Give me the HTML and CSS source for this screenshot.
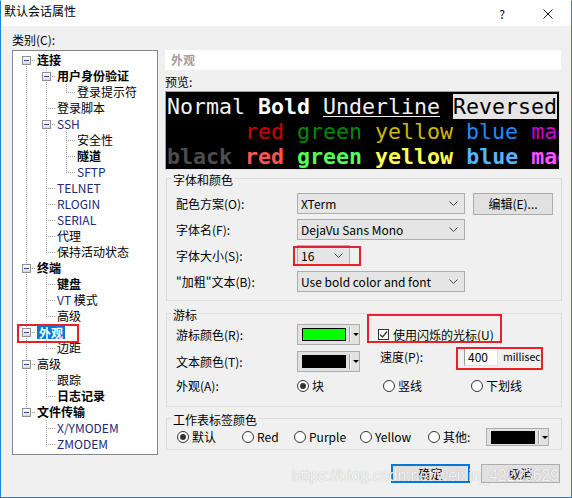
FILE: index.html
```
<!DOCTYPE html>
<html lang="zh-CN">
<head>
<meta charset="utf-8">
<title>默认会话属性</title>
<link rel="stylesheet" href="styles.css">
</head>
<body>
<div class="window">
  <div class="titlebar">
    <span class="title">默认会话属性</span>
    <span class="help">?</span>
    <svg class="close" width="10" height="10" viewBox="0 0 10 10"><path d="M0.5 0.5L9.5 9.5M9.5 0.5L0.5 9.5" stroke="#111" stroke-width="1" fill="none"/></svg>
  </div>
  <div class="main">
    <div class="leftcol">
      <div class="cat-label">类别(C):</div>
      <div class="tree">
        <div class="row"><span class="cell c-first"><span class="exp"></span></span><span class="txt b">连接</span></div>
        <div class="row"><span class="cell v"></span><span class="cell c-mid"><span class="exp"></span></span><span class="txt b">用户身份验证</span></div>
        <div class="row"><span class="cell v"></span><span class="cell v"></span><span class="cell c-last"></span><span class="txt">登录提示符</span></div>
        <div class="row"><span class="cell v"></span><span class="cell c-mid"></span><span class="txt">登录脚本</span></div>
        <div class="row"><span class="cell v"></span><span class="cell c-mid"><span class="exp"></span></span><span class="txt en">SSH</span></div>
        <div class="row"><span class="cell v"></span><span class="cell v"></span><span class="cell c-mid"></span><span class="txt">安全性</span></div>
        <div class="row"><span class="cell v"></span><span class="cell v"></span><span class="cell c-mid"></span><span class="txt b">隧道</span></div>
        <div class="row"><span class="cell v"></span><span class="cell v"></span><span class="cell c-last"></span><span class="txt en">SFTP</span></div>
        <div class="row"><span class="cell v"></span><span class="cell c-mid"></span><span class="txt en">TELNET</span></div>
        <div class="row"><span class="cell v"></span><span class="cell c-mid"></span><span class="txt en">RLOGIN</span></div>
        <div class="row"><span class="cell v"></span><span class="cell c-mid"></span><span class="txt en">SERIAL</span></div>
        <div class="row"><span class="cell v"></span><span class="cell c-mid"></span><span class="txt">代理</span></div>
        <div class="row"><span class="cell v"></span><span class="cell c-last"></span><span class="txt">保持活动状态</span></div>
        <div class="row"><span class="cell c-mid"><span class="exp"></span></span><span class="txt b">终端</span></div>
        <div class="row"><span class="cell v"></span><span class="cell c-mid"></span><span class="txt b">键盘</span></div>
        <div class="row"><span class="cell v"></span><span class="cell c-mid"></span><span class="txt"><span class="en">VT</span> 模式</span></div>
        <div class="row"><span class="cell v"></span><span class="cell c-last"></span><span class="txt">高级</span></div>
        <div class="row"><span class="cell c-mid"><span class="exp"></span></span><span class="txt b sel">外观</span></div>
        <div class="row"><span class="cell v"></span><span class="cell c-last"></span><span class="txt">边距</span></div>
        <div class="row"><span class="cell c-mid"><span class="exp"></span></span><span class="txt">高级</span></div>
        <div class="row"><span class="cell v"></span><span class="cell c-mid"></span><span class="txt">跟踪</span></div>
        <div class="row"><span class="cell v"></span><span class="cell c-last"></span><span class="txt b">日志记录</span></div>
        <div class="row"><span class="cell c-last"><span class="exp"></span></span><span class="txt b">文件传输</span></div>
        <div class="row"><span class="cell"></span><span class="cell c-mid"></span><span class="txt en">X/YMODEM</span></div>
        <div class="row"><span class="cell"></span><span class="cell c-last"></span><span class="txt en">ZMODEM</span></div>
      </div>
    </div>

    <div class="rightcol">
      <div class="page-head">外观</div>
      <div class="pv-label">预览:</div>
      <div class="preview">
<div class="pl"><span class="fg">Normal </span><span class="fgb">Bold</span><span class="fg"> </span><span class="fg ul">Underline</span><span class="fg"> </span><span class="rev">Reversed</span></div>
<div class="pl">      <span class="c-r">red</span> <span class="c-g">green</span> <span class="c-y">yellow</span> <span class="c-b">blue</span> <span class="c-m">magenta</span></div>
<div class="pl bold"><span class="c-k">black</span> <span class="c-R">red</span> <span class="c-G">green</span> <span class="c-Y">yellow</span> <span class="c-B">blue</span> <span class="c-M">magenta</span></div>
      </div>

      <div class="group g1">
        <div class="gtitle">字体和颜色</div>
        <div class="frow">
          <span class="flabel">配色方案(O):</span>
          <div class="select w168"><span>XTerm</span><svg width="9" height="5" viewBox="0 0 9 5"><path d="M0.5 0.5L4.5 4.5L8.5 0.5" fill="none" stroke="#444"/></svg></div>
          <div class="btn edit">编辑(E)...</div>
        </div>
        <div class="frow">
          <span class="flabel">字体名(F):</span>
          <div class="select w168"><span>DejaVu Sans Mono</span><svg width="9" height="5" viewBox="0 0 9 5"><path d="M0.5 0.5L4.5 4.5L8.5 0.5" fill="none" stroke="#444"/></svg></div>
        </div>
        <div class="frow">
          <span class="flabel">字体大小(S):</span>
          <div class="select w53"><span>16</span><svg width="9" height="5" viewBox="0 0 9 5"><path d="M0.5 0.5L4.5 4.5L8.5 0.5" fill="none" stroke="#444"/></svg></div>
        </div>
        <div class="frow">
          <span class="flabel">"加粗"文本(B):</span>
          <div class="select w168"><span>Use bold color and font</span><svg width="9" height="5" viewBox="0 0 9 5"><path d="M0.5 0.5L4.5 4.5L8.5 0.5" fill="none" stroke="#444"/></svg></div>
        </div>
      </div>

      <div class="group g2">
        <div class="gtitle">游标</div>
        <div class="crow r1">
          <span class="flabel">游标颜色(R):</span>
          <div class="colorbtn"><span class="swatch green"></span><span class="sep"></span><span class="tri"></span></div>
          <div class="check"><span class="cbox"><svg width="9" height="9" viewBox="0 0 9 9"><path d="M1 4.5L3.5 7L8 1.5" fill="none" stroke="#333" stroke-width="1.2"/></svg></span>使用闪烁的光标(U)</div>
        </div>
        <div class="crow r2">
          <span class="flabel">文本颜色(T):</span>
          <div class="colorbtn"><span class="swatch black"></span><span class="sep"></span><span class="tri"></span></div>
          <div class="speed"><span class="sp-label">速度(P):</span><span class="input">400</span><span class="unit">millisec</span></div>
        </div>
        <div class="crow r3">
          <span class="flabel">外观(A):</span>
          <span class="ritem w86"><span class="radio on"></span>块</span>
          <span class="ritem w88"><span class="radio"></span>竖线</span>
          <span class="ritem"><span class="radio"></span>下划线</span>
        </div>
      </div>

      <div class="group g3">
        <div class="gtitle">工作表标签颜色</div>
        <div class="trow">
          <span class="ritem w65"><span class="radio on"></span>默认</span>
          <span class="ritem w52"><span class="radio"></span>Red</span>
          <span class="ritem w66"><span class="radio"></span>Purple</span>
          <span class="ritem w68"><span class="radio"></span>Yellow</span>
          <span class="ritem w58"><span class="radio"></span>其他:</span>
          <div class="colorbtn short"><span class="swatch black"></span><span class="sep"></span><span class="tri"></span></div>
        </div>
      </div>

      <div class="buttons">
        <div class="btn dlg default">确定</div>
        <div class="btn dlg">取消</div>
      </div>
    </div>
  </div>

  <div class="mark m-tree"></div>
  <div class="mark m-size"></div>
  <div class="mark m-check"></div>
  <div class="mark m-speed"></div>
  <div class="watermark">https://blog.csdn.net/weixin_42223629</div>
</div>
</body>
</html>
```

FILE: styles.css
```
* { box-sizing: border-box; }
html, body { margin: 0; padding: 0; }
body {
  font-family: "Noto Sans CJK SC", "Noto Sans", sans-serif;
  font-size: 12px;
  color: #000;
  background: #fff;
}
.window {
  position: relative;
  width: 572px;
  height: 498px;
  border: 1px solid #1883d7;
  border-top-color: #fff;
  background: #f0f0f0;
  display: flex;
  flex-direction: column;
}
.titlebar {
  height: 25px;
  background: #fff;
  display: flex;
  align-items: center;
  padding-left: 3px;
  flex: none;
}
.title { align-self: flex-start; margin-top: 2px; line-height: 16px; }
.help { margin-left: auto; margin-right: 38px; line-height: 16px; font-size: 12px; }
.close { margin-right: 18px; }

.main {
  display: flex;
  gap: 7px;
  padding: 6px 8px 0 11px;
  flex: 1;
}
.leftcol { width: 146px; flex: none; }
.cat-label { line-height: 16px; margin-bottom: 2px; }
.tree {
  height: 405px;
  border: 1px solid #828790;
  background: #fff;
  padding: 1px 0 0 3px;
}
.row { display: flex; height: 16px; align-items: center; }
.cell {
  width: 20px;
  height: 16px;
  flex: none;
  display: flex;
  align-items: flex-start;
  padding-left: 6px;
}
.v {
  background: repeating-linear-gradient(to bottom, #a0a0a0 0 1px, transparent 1px 2px) 10px 0 / 1px 16px no-repeat;
}
.c-mid {
  background:
    repeating-linear-gradient(to right, #a0a0a0 0 1px, transparent 1px 2px) 10px 8px / 10px 1px no-repeat,
    repeating-linear-gradient(to bottom, #a0a0a0 0 1px, transparent 1px 2px) 10px 0 / 1px 16px no-repeat;
}
.c-last {
  background:
    repeating-linear-gradient(to right, #a0a0a0 0 1px, transparent 1px 2px) 10px 8px / 10px 1px no-repeat,
    repeating-linear-gradient(to bottom, #a0a0a0 0 1px, transparent 1px 2px) 10px 0 / 1px 9px no-repeat;
}
.c-first {
  background:
    repeating-linear-gradient(to right, #a0a0a0 0 1px, transparent 1px 2px) 10px 8px / 10px 1px no-repeat,
    repeating-linear-gradient(to bottom, #a0a0a0 0 1px, transparent 1px 2px) 10px 8px / 1px 8px no-repeat;
}
.exp {
  width: 9px;
  height: 9px;
  margin-top: 4px;
  border: 1px solid #919191;
  background: linear-gradient(#ffffff, #dcdcdc);
  display: flex;
  align-items: center;
  justify-content: center;
}
.exp::before { content: ""; width: 5px; height: 1px; background: #2b4a9b; }
.txt { margin-left: 1px; line-height: 16px; white-space: nowrap; }
.b { font-weight: 700; }
.en { color: #1c2a78; }
.sel {
  background: #0078d7;
  color: #fff;
  height: 13px;
  line-height: 13px;
  padding: 0 2px;
  display: inline-block;
}

.rightcol { width: 397px; flex: none; margin-top: 18px; }
.page-head {
  width: 396px;
  height: 20px;
  background: #fff;
  color: #a0a0a0;
  font-weight: 700;
  line-height: 20px;
  padding-left: 6px;
}
.pv-label { line-height: 16px; margin-top: 4px; }
.preview {
  margin-top: 1px;
  width: 395px;
  height: 79px;
  background: #000;
  border: 1px solid #a0a0a0;
  border-right-color: #e3e3e3;
  border-bottom-color: #e3e3e3;
  padding: 2px 0 0 1px;
  overflow: hidden;
  font-family: "DejaVu Sans Mono", monospace;
  font-size: 21.6px;
  line-height: 25px;
}
.pl { white-space: pre; height: 25px; }
.bold { font-weight: 700; }
.fg { color: #f2f2f2; }
.fgb { color: #fff; font-weight: 700; }
.ul { text-decoration: underline; text-decoration-thickness: 1px; text-underline-offset: 2px; }
.rev { background: #e5e5e5; color: #000; }
.c-r { color: #cd0000; }
.c-g { color: #008a00; }
.c-y { color: #cdb800; }
.c-b { color: #1e8cff; }
.c-m { color: #cd00cd; }
.c-k { color: #4d4d4d; }
.c-R { color: #ff5454; }
.c-G { color: #54ff54; }
.c-Y { color: #ffff54; }
.c-B { color: #54b4ff; }
.c-M { color: #ff54ff; }

.group {
  margin-left: 1px;
  width: 396px;
  border: 1px solid #dcdcdc;
  padding-left: 9px;
}
.gtitle {
  margin: -7px 0 0 -5px;
  padding: 0 2px;
  background: #f0f0f0;
  width: fit-content;
  line-height: 16px;
}
.g1 { margin-top: 8px; padding-bottom: 8px; }
.frow { display: flex; align-items: center; height: 21px; margin-top: 5px; }
.flabel { width: 121px; flex: none; line-height: 16px; white-space: nowrap; }
.select {
  display: flex;
  align-items: center;
  justify-content: space-between;
  height: 21px;
  background: #e5e5e5;
  border: 1px solid #adadad;
  padding: 0 6px 0 3px;
}
.w168 { width: 168px; }
.w53 { width: 53px; }
.btn {
  display: flex;
  align-items: center;
  justify-content: center;
  background: #e1e1e1;
  border: 1px solid #adadad;
}
.edit { width: 80px; height: 22px; margin-left: 8px; }

.g2 { margin-top: 12px; padding-bottom: 12px; }
.crow { display: flex; align-items: center; height: 21px; margin-top: 6px; }
.r1 { margin-top: 1px; }
.r3 { height: 16px; }
.colorbtn {
  display: flex;
  align-items: center;
  width: 63px;
  height: 21px;
  flex: none;
  background: #e1e1e1;
  border: 1px solid #adadad;
  padding-left: 4px;
}
.colorbtn.short { height: 18px; }
.swatch { width: 44px; height: 13px; border: 1px solid #000; flex: none; }
.green { background: #00ff00; }
.black { background: #000; }
.sep { width: 1px; height: 15px; background: #9a9a9a; margin-left: 3px; box-shadow: 1px 0 #fafafa; }
.short .sep { height: 13px; }
.tri {
  margin-left: 3px;
  width: 0;
  height: 0;
  border-left: 3px solid transparent;
  border-right: 3px solid transparent;
  border-top: 3px solid #000;
}
.check { display: flex; align-items: center; margin-left: 18px; line-height: 16px; }
.cbox {
  width: 11px;
  height: 11px;
  border: 1px solid #333;
  background: #fff;
  margin-right: 4px;
  display: flex;
  align-items: center;
  justify-content: center;
}
.speed { display: flex; align-items: center; align-self: flex-start; margin-top: -4px; margin-left: 20px; }
.sp-label { width: 84px; line-height: 16px; }
.input {
  width: 34px;
  height: 19px;
  background: #fff;
  border: 1px solid #9a9a9a;
  border-right-color: #e3e3e3;
  border-bottom-color: #e3e3e3;
  padding-left: 3px;
  line-height: 17px;
}
.unit { margin-left: 5px; font-size: 10.5px; line-height: 14px; }

.ritem { display: flex; align-items: center; line-height: 16px; flex: none; white-space: nowrap; }
.radio {
  width: 12px;
  height: 12px;
  flex: none;
  border: 1px solid #333;
  border-radius: 50%;
  background: #fff;
  margin-right: 3px;
  display: flex;
  align-items: center;
  justify-content: center;
}
.radio.on::after { content: ""; width: 6px; height: 6px; border-radius: 50%; background: #333; }
.w86 { width: 86px; }
.w88 { width: 88px; }
.w65 { width: 65px; }
.w52 { width: 52px; }
.w66 { width: 66px; }
.w68 { width: 68px; }
.w58 { width: 58px; }

.g3 { margin-top: 11px; padding-bottom: 3px; padding-left: 10px; }
.g3 .gtitle { margin-left: -6px; }
.trow { display: flex; align-items: center; height: 18px; }

.buttons { display: flex; justify-content: flex-end; gap: 11px; margin-top: 14px; margin-right: 2px; }
.dlg { width: 79px; height: 19px; }
.default { border: 2px solid #0078d7; }

.mark { position: absolute; border: 2px solid #e5212a; }
.m-tree { left: 16px; top: 323px; width: 62px; height: 19px; }
.m-size { left: 292px; top: 245px; width: 68px; height: 20px; }
.m-check { left: 366px; top: 313px; width: 135px; height: 29px; }
.m-speed { left: 455px; top: 346px; width: 87px; height: 23px; }

.watermark {
  position: absolute;
  left: 291px;
  top: 465px;
  font-family: "Liberation Sans", Arial, sans-serif;
  font-size: 15.7px;
  line-height: 20px;
  color: rgba(255, 255, 255, 0.85);
  text-shadow: 0 0 1px rgba(110, 110, 110, 0.55);
  white-space: nowrap;
  pointer-events: none;
}
```
